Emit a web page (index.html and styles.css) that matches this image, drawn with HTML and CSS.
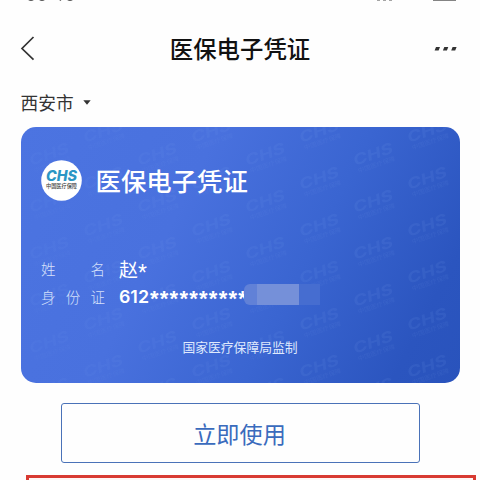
FILE: index.html
```
<!DOCTYPE html>
<html lang="zh-CN">
<head>
<meta charset="utf-8">
<title>医保电子凭证</title>
<link rel="stylesheet" href="styles.css">
</head>
<body>
<div class="screen">
  <div class="status">
    <svg width="480" height="3" viewBox="0 0 480 3">
      <g fill="none" stroke="#555" stroke-width="1.4">
        <path d="M28 -1q3 2.6 6 0M39 -1q3 2.6 6 0M59 -1l2 1.5M67 -1q3 2.6 6 0"/>
        <path d="M377 0h3M383 0h3M389 0h3" stroke="#888"/>
        <path d="M433 .2h23" stroke="#777"/>
      </g>
    </svg>
  </div>
  <header class="nav">
    <svg class="back" width="16" height="26" viewBox="0 0 16 26"><path d="M13.500 2 2 13.500l11.500 11.200" fill="none" stroke="#333" stroke-width="1.7"/></svg>
    <h1>医保电子凭证</h1>
    <svg class="more" width="24" height="6" viewBox="0 0 24 6"><path d="M2 2h4L4.600 5.400H.600zM10.300 2h4l-1.400 3.400h-4zM18.600 2h4l-1.400 3.400h-4z" fill="#333"/></svg>
  </header>
  <div class="city"><span>西安市</span><svg width="8" height="5" viewBox="0 0 8 5"><path d="M.3.2h7.400L4 4.800z" fill="#333"/></svg></div>
  <section class="card">
    <svg class="marks" width="439" height="256" viewBox="0 0 439 256">
      <defs>
        <g id="mark" transform="rotate(-19)">
          <text class="mark-big" x="0" y="4" textLength="41" lengthAdjust="spacingAndGlyphs">CHS</text>
          <text class="mark-small" x="1" y="12" textLength="39" lengthAdjust="spacingAndGlyphs">中国医疗保障</text>
        </g>
        <pattern id="tile" x="329" y="49" width="108" height="47" patternUnits="userSpaceOnUse">
          <use href="#mark" x="4" y="-14"/>
          <use href="#mark" x="4" y="33"/>
          <use href="#mark" x="58" y="10"/>
          <use href="#mark" x="58" y="57"/>
        </pattern>
      </defs>
      <rect width="439" height="256" fill="url(#tile)"/>
    </svg>
    <div class="brand">
      <svg width="41" height="41" viewBox="0 0 41 41">
        <circle cx="20.500" cy="20.500" r="20.300" fill="#fff"/>
        <text class="logo" x="5" y="20.800" textLength="31" lengthAdjust="spacingAndGlyphs">CHS</text>
        <text class="logo-cn" x="5" y="28.300" textLength="31" lengthAdjust="spacingAndGlyphs">中国医疗保障</text>
      </svg>
      <h2>医保电子凭证</h2>
    </div>
    <div class="row"><div class="label"><span>姓</span><span>名</span></div><div class="name"><span>赵</span><span class="star">*</span></div></div>
    <div class="row id-row"><div class="label"><span>身</span><span>份</span><span>证</span></div><div class="number"><span>612</span><span class="stars">**********</span></div><div class="mask"><i></i><i></i><i></i></div></div>
    <div class="issuer">国家医疗保障局监制</div>
  </section>
  <div class="use">立即使用</div>
  <div class="highlight"></div>
</div>
</body>
</html>
```
FILE: styles.css
```
* { box-sizing: border-box; margin: 0; padding: 0; }
body { width: 480px; height: 480px; overflow: hidden; background: #fefefe; font-family: "Noto Sans CJK SC", sans-serif; }
.screen { width: 480px; height: 480px; overflow: hidden; display: flex; flex-direction: column; }
.status { height: 3px; flex: none; }
.status svg { display: block; }
.nav { height: 88px; flex: none; padding: 1px 22px 0 20px; display: grid; grid-template-columns: 38px 1fr 36px; align-items: center; }
.nav h1 { font-size: 23.4px; font-weight: 500; line-height: 34px; text-align: center; color: #111; white-space: nowrap; }
.more { justify-self: end; }
.city { height: 22px; flex: none; margin-bottom: 13.500px; padding-left: 20.500px; display: flex; align-items: center; gap: 9px; font-size: 17.700px; line-height: 22px; color: #333; }
.card { width: 439px; height: 256px; flex: none; margin-left: 20.500px; position: relative; overflow: hidden; border-radius: 15px; color: #fff; background: linear-gradient(117deg, #4c74e1 0%, #4971de 35%, #3a65d1 62%, #2b55bf 88%, #2953bc 100%); }
.marks { position: absolute; left: 0; top: 0; mask-image: linear-gradient(90deg, rgba(0,0,0,.5), #000 80%); }
.marks text { fill: #9bb6f5; fill-opacity: .08; }
.mark-big { font: italic 700 15px Inter, sans-serif; }
.mark-small { font-size: 6px; }
.brand, .row, .issuer { position: relative; }
.brand { display: flex; align-items: center; gap: 14px; padding: 33px 0 0 20px; height: 74px; }
.brand h2 { font-size: 25.400px; font-weight: 500; line-height: 40px; }
.logo { font: italic 800 14px Inter, sans-serif; fill: #2b96c4; }
.logo-cn { font-size: 5.500px; font-weight: 500; fill: #444; }
.row { display: flex; align-items: center; height: 28px; padding-left: 20.500px; }
.brand + .row { margin-top: 54px; }
.label { width: 64px; display: flex; justify-content: space-between; font-size: 14.500px; line-height: 24px; font-weight: 300; color: #d6e0fb; }
.name { margin-left: 14px; display: flex; height: 28px; font-size: 19px; line-height: 28px; }
.star { font: 23px/36px "Liberation Sans", sans-serif; }
.number { margin-left: 14px; width: 126px; display: flex; align-items: center; height: 28px; white-space: nowrap; font: 600 17.800px/28px Inter, sans-serif; }
.stars { margin-left: 1px; padding-top: 4px; font: bold 22px/28px "Liberation Sans", sans-serif; letter-spacing: 1.250px; }
.mask { position: relative; display: flex; height: 21px; margin: -5px 0 0 -1px; }
.mask i { height: 21px; background: #7590d9; }
.mask i:nth-child(1) { width: 13px; background: #6181d7; border-radius: 6px 0 0 6px; }
.mask i:nth-child(2) { width: 42px; }
.mask i:nth-child(3) { width: 21px; background: #466dd0; }
.issuer { margin-top: 26px; text-align: center; font-size: 12.800px; line-height: 20px; color: #dfe9fd; }
.use { width: 359px; height: 60px; flex: none; margin: 20.500px 0 0 61px; border: 1.500px solid #4a72b8; border-radius: 3px; text-align: center; font-size: 23.200px; line-height: 59px; text-indent: -2px; color: #3a6bbd; }
.highlight { width: 450px; height: 40px; flex: none; margin: 12px 0 0 26px; border: 3px solid #d83a32; background: #fff6f5; }
```
